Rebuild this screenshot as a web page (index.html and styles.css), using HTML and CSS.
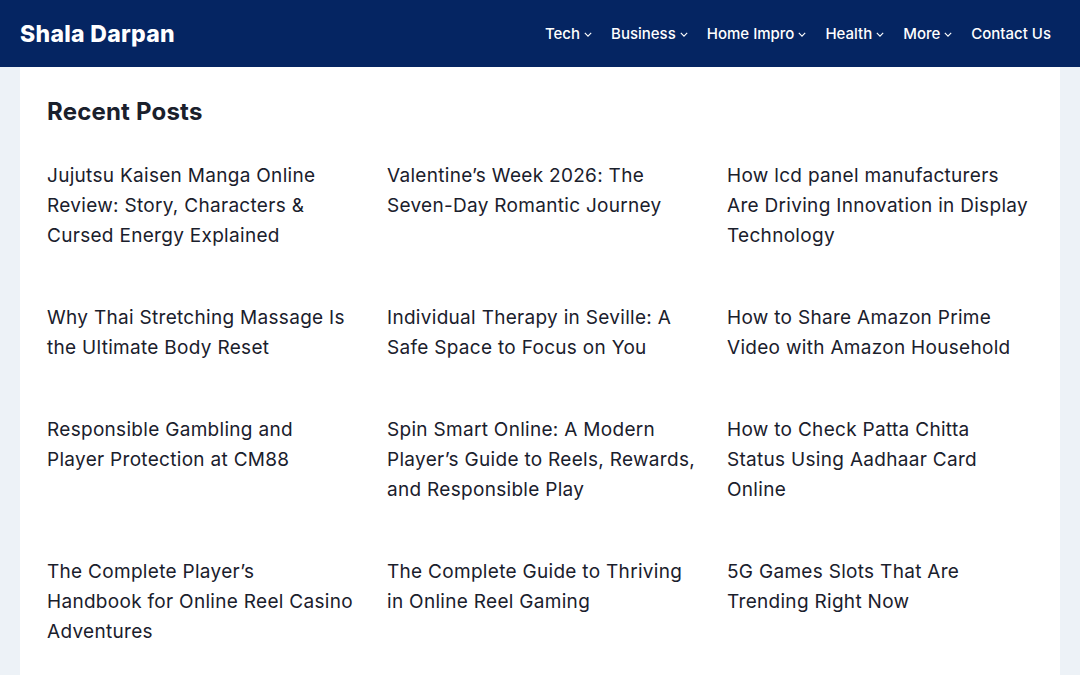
FILE: index.html
```html
<!DOCTYPE html>
<html lang="en">
<head>
<meta charset="utf-8">
<title>Shala Darpan</title>
<link rel="stylesheet" href="styles.css">
</head>
<body>
<header class="site-header">
  <a class="logo" href="#">Shala Darpan</a>
  <nav class="nav">
    <a class="nav-item" href="#">Tech <svg class="chev" viewBox="0 0 10 6"><path d="M1 1l4 4 4-4"/></svg></a>
    <a class="nav-item" href="#">Business <svg class="chev" viewBox="0 0 10 6"><path d="M1 1l4 4 4-4"/></svg></a>
    <a class="nav-item" href="#">Home Impro <svg class="chev" viewBox="0 0 10 6"><path d="M1 1l4 4 4-4"/></svg></a>
    <a class="nav-item" href="#">Health <svg class="chev" viewBox="0 0 10 6"><path d="M1 1l4 4 4-4"/></svg></a>
    <a class="nav-item" href="#">More <svg class="chev" viewBox="0 0 10 6"><path d="M1 1l4 4 4-4"/></svg></a>
    <a class="nav-item" href="#">Contact Us</a>
  </nav>
</header>
<main class="page">
  <section class="card">
    <h2 class="heading">Recent Posts</h2>
    <ul class="posts">
      <li><a href="#">Jujutsu Kaisen Manga Online Review: Story, Characters &amp; Cursed Energy Explained</a></li>
      <li><a href="#">Valentine’s Week 2026: The Seven-Day Romantic Journey</a></li>
      <li><a href="#">How lcd panel manufacturers Are Driving Innovation in Display Technology</a></li>
      <li><a href="#">Why Thai Stretching Massage Is the Ultimate Body Reset</a></li>
      <li><a href="#">Individual Therapy in Seville: A Safe Space to Focus on You</a></li>
      <li><a href="#">How to Share Amazon Prime Video with Amazon Household</a></li>
      <li><a href="#">Responsible Gambling and Player Protection at CM88</a></li>
      <li><a href="#">Spin Smart Online: A Modern Player’s Guide to Reels, Rewards, and Responsible Play</a></li>
      <li><a href="#">How to Check Patta Chitta Status Using Aadhaar Card Online</a></li>
      <li><a href="#">The Complete Player’s Handbook for Online Reel Casino Adventures</a></li>
      <li><a href="#">The Complete Guide to Thriving in Online Reel Gaming</a></li>
      <li><a href="#">5G Games Slots That Are Trending Right Now</a></li>
    </ul>
  </section>
</main>
</body>
</html>
```

FILE: styles.css
```css
* { box-sizing: border-box; }
html, body { margin: 0; padding: 0; }
body {
  background: #edf2f7;
  font-family: Inter, "Open Sans", sans-serif;
  color: #1a202c;
  height: 675px;
  overflow: hidden;
}
a { color: inherit; text-decoration: none; }

.site-header {
  height: 67px;
  background: #052562;
  display: flex;
  align-items: center;
  justify-content: space-between;
  padding: 0 29px 0 20px;
}
.logo {
  color: #fff;
  font-weight: 800;
  font-size: 23px;
  letter-spacing: 0.3px;
}
.nav {
  display: flex;
  align-items: center;
  gap: 19px;
}
.nav-item {
  color: #fff;
  font-size: 15px;
  font-weight: 500;
  display: flex;
  align-items: center;
  gap: 4px;
}
.chev {
  width: 8px;
  height: 5px;
  fill: none;
  stroke: #fff;
  stroke-width: 1.4;
  margin-top: 2px;
}

.page {
  padding: 0 20px;
}
.card {
  background: #fff;
  padding: 28px 27px 40px;
  min-height: 620px;
}
.heading {
  margin: 0 0 32px;
  font-size: 24px;
  font-weight: 700;
  line-height: 34px;
  letter-spacing: 0.2px;
  color: #1a202c;
}
.posts {
  list-style: none;
  margin: 0;
  padding: 0;
  display: grid;
  grid-template-columns: repeat(3, 340px);
  row-gap: 52px;
}
.posts li {
  padding-right: 34px;
  font-size: 19px;
  line-height: 30px;
  letter-spacing: 0.3px;
  color: #1a202c;
}
.posts li:nth-child(3n+2) {
  padding-right: 24px;
}
```
